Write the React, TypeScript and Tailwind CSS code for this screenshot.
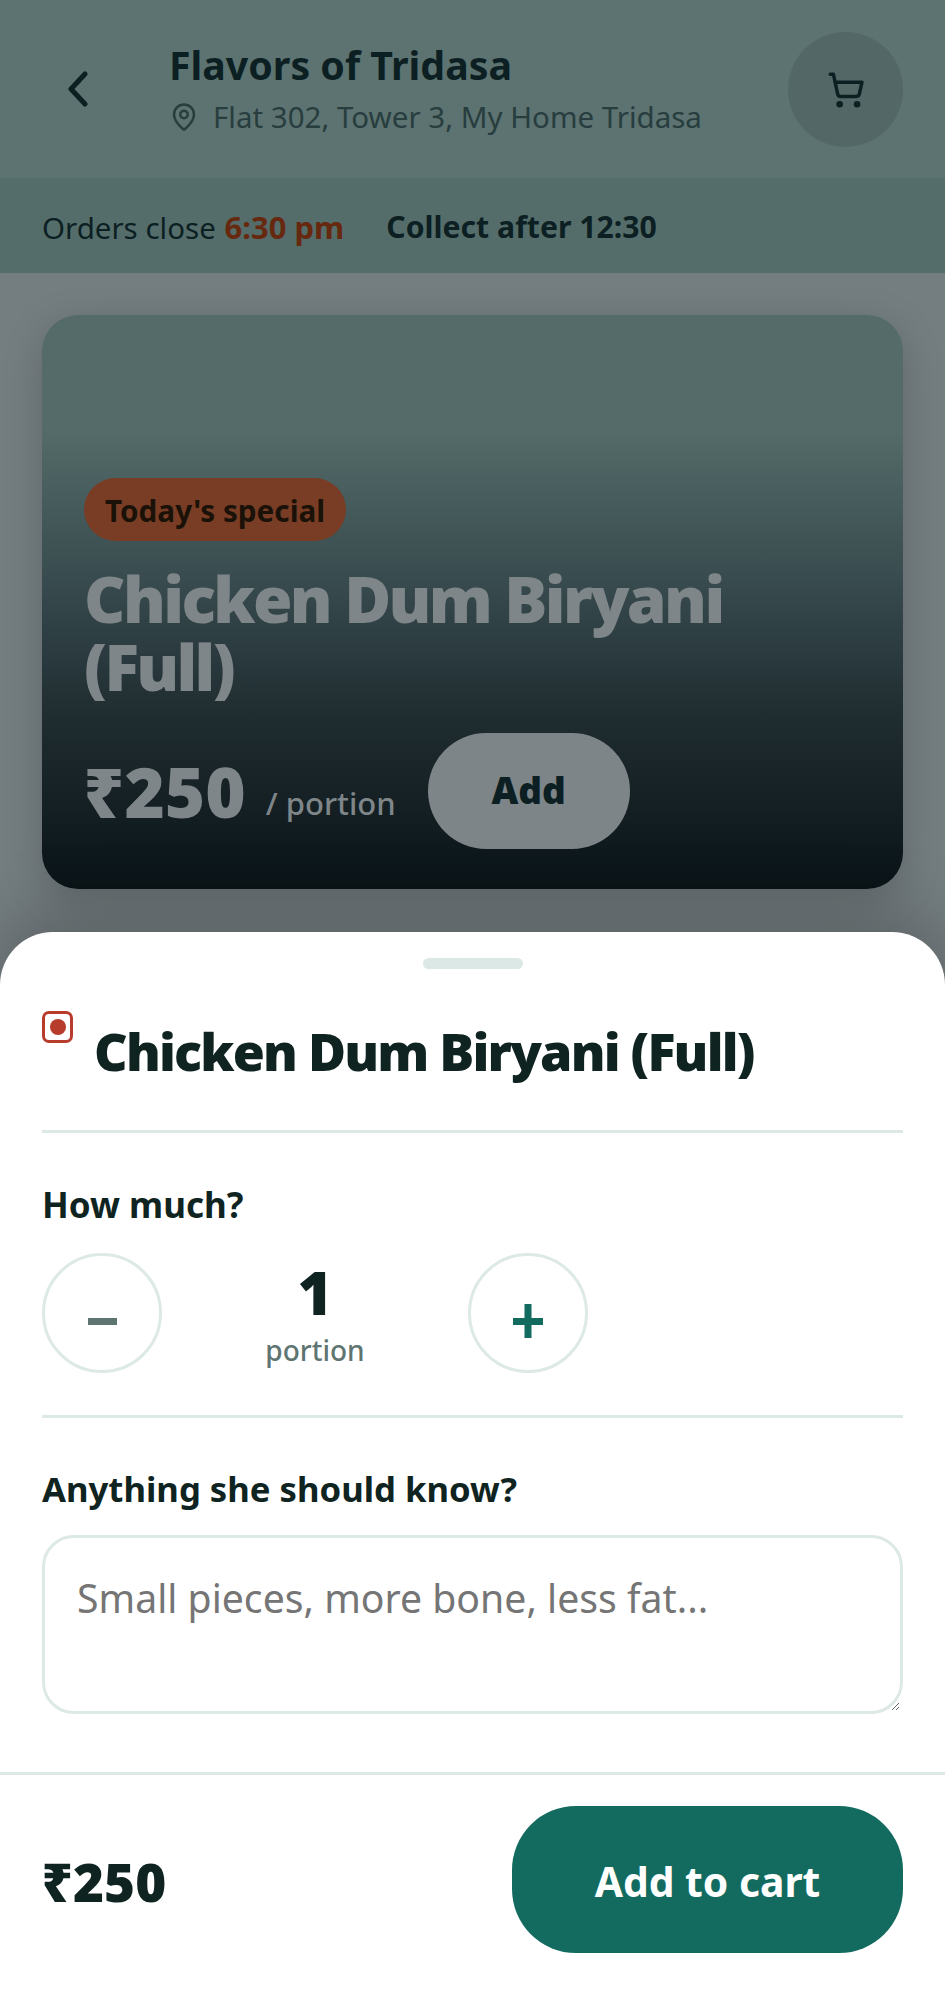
import React from 'react';
import { MapPin, ShoppingCart } from 'lucide-react';

const font = { fontFamily: '"Noto Sans", sans-serif' };

function Stepper() {
  return (
    <div className="flex items-center mt-[25px]">
      <button className="w-[120px] h-[120px] rounded-full border-[3px] border-[#dde9e6] bg-white flex items-center justify-center pt-[16px]">
        <span className="w-[29px] h-[7px] bg-[#5f7571]"></span>
      </button>
      <div className="w-[306px] flex flex-col items-center">
        <span className="text-[60px] leading-[70px] font-black text-[#0f2421]">1</span>
        <span className="mt-[4px] text-[28px] leading-[38px] font-medium text-[#5f7571]">portion</span>
      </div>
      <button className="w-[120px] h-[120px] rounded-full border-[3px] border-[#dde9e6] bg-white flex items-center justify-center pt-[16px] text-[#136b60]">
        <svg width="30" height="34" viewBox="0 0 30 34" fill="currentColor">
          <rect x="0" y="14" width="30" height="7" />
          <rect x="11.5" y="0" width="7" height="34" />
        </svg>
      </button>
    </div>
  );
}

export default function App() {
  return (
    <div style={font} className="relative h-[1995px] w-[945px] overflow-hidden bg-[#747d80]">
      {/* Pagina de fondo, ya oscurecida */}
      <header className="h-[178px] bg-[#5d7371] flex items-start pl-[42px] pr-[42px] pt-[32px]">
        <div className="w-[127px] h-[114px] flex items-center">
          <svg width="22" height="36" viewBox="0 0 22 36" fill="none" stroke="#0c1f22" strokeWidth="5" strokeLinecap="round" strokeLinejoin="round" className="ml-[25px]">
            <path d="M18 3 L4 18 L18 33" />
          </svg>
        </div>
        <div className="flex-1 pt-[10px]">
          <h1 className="text-[39.3px] leading-[46px] font-bold text-[#0c1f22]">Flavors of Tridasa</h1>
          <div className="flex items-center mt-[9px] text-[#273d3e]">
            <MapPin className="w-[30px] h-[30px]" strokeWidth={2} />
            <span className="ml-[14px] text-[29.5px] leading-[40px]">Flat 302, Tower 3, My Home Tridasa</span>
          </div>
        </div>
        <div className="w-[115px] h-[115px] rounded-full bg-[#536866] flex items-center justify-center">
          <ShoppingCart className="w-[38px] h-[38px] text-[#0c1f22]" strokeWidth={2.2} />
        </div>
      </header>
      <div className="h-[95px] bg-[#556d6a] flex items-center px-[42px] pt-[3px] text-[29.5px]">
        <span className="text-[#0c1f22]">Orders close <span className="ml-[1px] text-[31px] font-bold text-[#66290f]">6:30 pm</span></span>
        <span className="ml-[42px] text-[30.2px] font-bold text-[#0c1f22]">Collect after 12:30</span>
      </div>

      <div className="px-[42px] pt-[42px]">
        <div className="h-[574px] rounded-[36px] bg-[linear-gradient(180deg,#546b69_0%,#546b69_20%,#34464a_50%,#1f2c30_70%,#0a1418_100%)] shadow-[0_10px_40px_rgba(0,0,0,0.18)] pl-[42px] pt-[163px]">
          <span className="inline-block h-[63px] rounded-full bg-[#793d25] px-[21px] text-[29.7px] leading-[65px] font-bold text-[#1a1208]">Today's special</span>
          <h2 className="mt-[24px] w-[700px] text-[64px] leading-[68px] tracking-[-2.6px] font-black text-[#7e8689]">Chicken Dum Biryani (Full)</h2>
          <div className="flex items-center mt-[32px]">
            <span className="text-[69px] leading-[116px] font-black text-[#7e8689]">₹250</span>
            <span className="ml-[20px] mt-[24px] text-[31px] font-medium text-[#7e8689]">/ portion</span>
            <button className="ml-[32px] w-[202px] h-[116px] rounded-[58px] bg-[#7e8588] pb-[2px] text-[37px] font-black text-[#0c1f22]">Add</button>
          </div>
        </div>
      </div>

      {/* Bottom sheet */}
      <div className="absolute left-0 right-0 bottom-0 h-[1063px] bg-white rounded-t-[53px] shadow-[0_-20px_70px_rgba(0,0,0,0.22)] flex flex-col">
        <div className="mx-auto mt-[26px] w-[100px] h-[11px] rounded-full bg-[#dce8e5]"></div>
        <div className="mx-[42px] h-[164px] border-b-[3px] border-[#dde9e6] flex items-start">
          <div className="mt-[42px] w-[31px] h-[32px] rounded-[7px] border-[3px] border-[#b83c2c] flex items-center justify-center">
            <span className="w-[16px] h-[16px] rounded-full bg-[#b83c2c]"></span>
          </div>
          <h2 className="ml-[21px] mt-[48px] text-[52px] leading-[68px] tracking-[-1.8px] font-black text-[#0f2421]">Chicken Dum Biryani (Full)</h2>
        </div>
        <div className="mx-[42px] h-[285px] border-b-[3px] border-[#dde9e6] pt-[49px]">
          <h3 className="text-[35px] leading-[46px] font-bold text-[#0f2421]">How much?</h3>
          <Stepper />
        </div>
        <div className="mx-[42px] pt-[48px]">
          <h3 className="text-[34.7px] leading-[46px] font-bold text-[#0f2421]">Anything she should know?</h3>
          <textarea
            className="block mt-[23px] w-full h-[179px] rounded-[32px] border-[3px] border-[#dde9e6] px-[32px] py-[35px] text-[39.2px] leading-[50px] outline-none placeholder:text-[#757575]"
            placeholder="Small pieces, more bone, less fat..."
          />
        </div>
        <div className="mt-[58px] border-t-[3px] border-[#dde9e6] flex items-center justify-between px-[42px] pt-[31px]">
          <span className="text-[53px] font-black text-[#0f2421] pt-[5px]">₹250</span>
          <button className="w-[391px] h-[147px] rounded-[64px] bg-[#136b60] pt-[4px] text-[40.8px] font-bold text-white">Add to cart</button>
        </div>
      </div>
    </div>
  );
}
